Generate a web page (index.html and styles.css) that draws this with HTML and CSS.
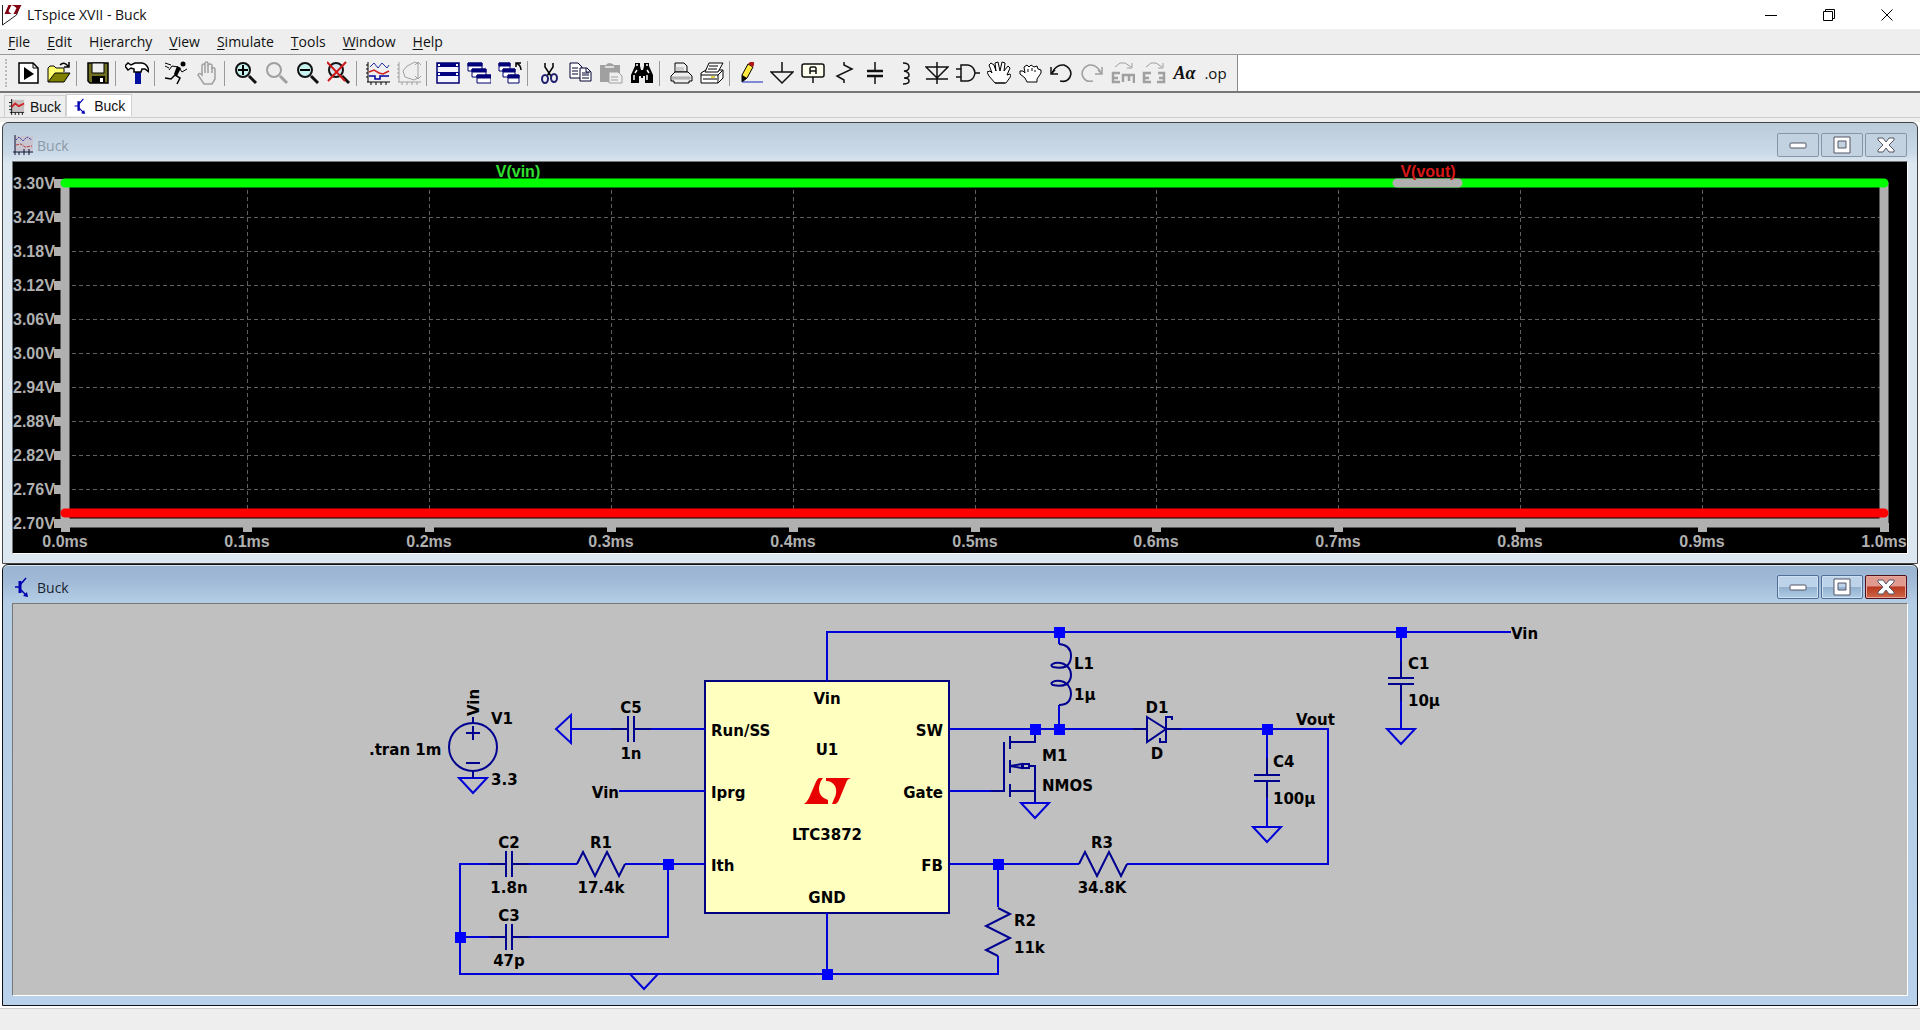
FILE: index.html
```html
<!DOCTYPE html>
<html lang="en">

<head>
    <meta charset="utf-8" />
    <meta name="viewport" content="width=device-width, initial-scale=1" />
    <title>LTspice XVII - Buck</title>
    <link rel="stylesheet" href="styles.css">
</head>

<body>
    <!-- shared shapes -->
    <svg class="defs" width="0" height="0" aria-hidden="true">
        <defs>
            <symbol id="lens" viewBox="0 0 24 24">
                <path d="M15 15l7 7" stroke="currentColor" stroke-width="3" fill="none" />
                <circle cx="9" cy="9" r="7" stroke="currentColor" stroke-width="2" />
            </symbol>
            <symbol id="transistor" viewBox="0 0 20 20">
                <path d="M2 10h4M7 8l6-7M7 12l6 6" stroke="#0000b0" fill="none" stroke-width="1.500" />
                <path d="M7 4v12" stroke="#0000b0" stroke-width="3" />
                <path d="M15 20l-5-1 4-4z" fill="#0000b0" />
            </symbol>
            <symbol id="win-min" viewBox="0 0 18 18">
                <rect x="1" y="7" width="16" height="5" rx="1" fill="#fff" stroke="#556" />
            </symbol>
            <symbol id="win-max" viewBox="0 0 18 18">
                <path d="M1 1h16v16H1zM5 5v7h8V5z" fill="#fff" stroke="#556" fill-rule="evenodd" />
            </symbol>
            <symbol id="win-close" viewBox="0 0 18 18">
                <path d="M1 2h5l3 4 3-4h5v2l-5 5 5 5v2h-5l-3-4-3 4H1v-2l5-5-5-5z" fill="#fff" stroke="#556" />
            </symbol>
        </defs>
    </svg>

    <header class="titlebar">
        <svg class="logo" viewBox="0 0 20 22">
            <path d="M1 1v20L15 11l3-8" fill="none" stroke="#222" stroke-width="1" />
            <path d="M3 10L7 1h3L7 7q1 2 3 3zM10 1h10l-5 9h-3l3-6q-2-2-5-3z" fill="#800010" />
        </svg>
        <h1>LTspice XVII - Buck</h1>
        <div class="captions">
            <button aria-label="Minimize"><svg viewBox="0 0 14 14"><path d="M1 7.500h12" /></svg></button>
            <button aria-label="Restore"><svg viewBox="0 0 14 14"><path d="M1.500 3.500h9v9h-9zM3.500 3V1.500h9v9H11" /></svg></button>
            <button aria-label="Close"><svg viewBox="0 0 14 14"><path d="M1.500 1.500l11 11M12.500 1.500l-11 11" /></svg></button>
        </div>
    </header>

    <nav class="menu">
        <button><u>F</u>ile</button>
        <button><u>E</u>dit</button>
        <button>H<u>i</u>erarchy</button>
        <button><u>V</u>iew</button>
        <button><u>S</u>imulate</button>
        <button><u>T</u>ools</button>
        <button><u>W</u>indow</button>
        <button><u>H</u>elp</button>
    </nav>

    <div class="toolbar-row">
        <div class="toolbar">
            <button aria-label="New schematic"><svg viewBox="0 0 24 24">
                <path d="M3 2h14l5 5v15H3z" fill="#fff" stroke="#000" stroke-width="1.500" /><path d="M17 2v5h5" fill="none" stroke="#000" />
                <path d="M8 6v13l10-6z" />
            </svg></button>
            <button aria-label="Open"><svg viewBox="0 0 24 24">
                <path d="M1 21V7l2-2h4l2 2h8v4" fill="#ffff70" stroke="#000" />
                <path d="M1 21l7-9h15l-6 9z" fill="#808000" stroke="#000" />
                <path d="M13 4q4-4 8 1M22 1v5h-5" fill="none" stroke="#000" stroke-width="1.500" />
            </svg></button>
            <span class="sep"></span>
            <button aria-label="Save"><svg viewBox="0 0 24 24">
                <path d="M2 2h20v20H4l-2-2z" fill="#707020" stroke="#000" stroke-width="1.500" />
                <path d="M6 2h12v10H6z" fill="#eee" stroke="#000" /><path d="M6 15h13v7H6z" /><path d="M14 17h3v4h-3z" fill="#fff" />
            </svg></button>
            <span class="sep"></span>
            <button aria-label="Control panel"><svg viewBox="0 0 24 24">
                <path d="M10 10h6v13h-6z" fill="#0010a0" />
                <path d="M0 5l3-3 3 2 4-2h7q6 1 7 9l-4-3h-3l-1 3H9V8L6 7 3 9z" fill="#fff" stroke="#000" stroke-width="1.500" />
            </svg></button>
            <span class="sep"></span>
            <button aria-label="Run"><svg viewBox="0 0 24 24">
                <circle cx="19" cy="3" r="2.500" />
                <path d="M14 8l-3 6 5 3-3 6M11 14l-4 4-6-1" fill="none" stroke="#000" stroke-width="1.500" />
                <path d="M13 5l4 2-4 8-3-2z" />
                <path d="M14 6L8 5 5 9M16 8l2 3 5-3M1 2l6 2M1 5l4 2" fill="none" stroke="#000" />
            </svg></button>
            <button aria-label="Halt" class="off"><svg viewBox="0 0 24 24">
                <path d="M7 14V4q2-2 3 0V2q2-2 3 0v2q2-2 4 0v3q2-1 3 1v10l-3 5H9L3 14q1-3 4 0z" fill="#eee" stroke="currentColor" stroke-width="1.500" />
                <path d="M10 4v8M13 4v8M17 6v6" stroke="currentColor" stroke-width="1.500" />
            </svg></button>
            <span class="sep"></span>
            <button aria-label="Zoom in"><svg viewBox="0 0 24 24">
                <use href="#lens" fill="#c8f4f0" /><path d="M4 9h10M9 4v10" stroke="#000" stroke-width="2" />
            </svg></button>
            <button aria-label="Zoom area" class="off"><svg viewBox="0 0 24 24"><use href="#lens" fill="#eee" /></svg></button>
            <button aria-label="Zoom out"><svg viewBox="0 0 24 24">
                <use href="#lens" fill="#c8f4f0" /><path d="M4 9h10" stroke="#000" stroke-width="2" />
            </svg></button>
            <button aria-label="Zoom to fit"><svg viewBox="0 0 24 24">
                <use href="#lens" fill="#d8e4f0" /><path d="M0 1l18 19M19 1L1 20" stroke="#d01818" stroke-width="2" />
            </svg></button>
            <span class="sep"></span>
            <button aria-label="Autorange"><svg viewBox="0 0 24 24" fill="none">
                <path d="M2 1v20M1 21h23M0 4h2M0 8h2M0 12h2M0 16h2M5 21v3M10 21v3M15 21v3M20 21v3" stroke="#000" />
                <path d="M4 6l4-4 4 5 4-5 5 5 2-3" stroke="#2030a0" />
                <path d="M3 11l5-2 5 3 4 1 6-3" stroke="#d02020" stroke-width="1.500" />
                <path d="M3 15h6v3h5v-3h9" stroke="#0000a0" stroke-width="1.500" />
            </svg></button>
            <button aria-label="FFT" class="off"><svg viewBox="0 0 24 24" fill="none" stroke="currentColor">
                <path d="M2 1v20M1 21h23M0 4h2M0 8h2M0 12h2M0 16h2M5 21v3M10 21v3M15 21v3M20 21v3" />
                <path d="M21 3l-3-2-8 4-4 5 2 6 9 3 4-2M21 1v17M18 4l3-3 3 3M18 15l3 3 3-3" />
            </svg></button>
            <span class="sep"></span>
            <button aria-label="Tile windows"><svg viewBox="0 0 24 24">
                <path d="M1 2h22v20H1z" fill="#f4f4ff" stroke="#000070" stroke-width="1.500" />
                <path d="M1 2h22v4H1zM1 11h22v4H1z" fill="#000080" /><path d="M2 3h2v2H2zM20 3h2v2h-2zM2 12h2v2H2zM20 12h2v2h-2z" fill="#fff" />
            </svg></button>
            <button aria-label="Cascade windows"><svg viewBox="0 0 24 24" fill="#fff" stroke="#000070">
                <path d="M1 2h14v8H1zM5 8h14v8H5zM10 14h14v8H10z" /><path d="M1 2h14v3H1zM5 8h14v3H5zM10 14h14v3H10z" fill="#000080" />
            </svg></button>
            <button aria-label="Close all windows"><svg viewBox="0 0 24 24" fill="#fff" stroke="#000070">
                <path d="M1 2h11v8H1zM5 8h12v8H5zM10 14h11v8H10z" /><path d="M1 2h11v3H1zM5 8h12v3H5zM10 14h11v3H10z" fill="#000080" />
                <path d="M18 6V2h5M18 2q5 2 5 7" fill="none" stroke="#000" stroke-width="1.500" />
            </svg></button>
            <span class="sep"></span>
            <button aria-label="Cut"><svg viewBox="0 0 24 24" fill="none">
                <path d="M8 2v4l6 9M16 2v4l-6 9" stroke="#000" stroke-width="1.500" />
                <ellipse cx="8" cy="18" rx="3" ry="4" stroke="#202070" stroke-width="2" /><ellipse cx="17" cy="17" rx="3" ry="4" stroke="#202070" stroke-width="2" />
            </svg></button>
            <button aria-label="Copy"><svg viewBox="0 0 24 24" fill="#fff" stroke="#000030">
                <path d="M2 2h8l4 4v11H2z" /><path d="M4 7h6M4 10h6M4 13h6" />
                <path d="M12 7h7l4 4v9H12z" /><path d="M14 12h7M14 14h7M14 17h7M18 7v4h4" />
            </svg></button>
            <button aria-label="Paste" class="off"><svg viewBox="0 0 24 24">
                <path d="M1 4h6q3-4 8 0h6v17H1z" fill="currentColor" /><path d="M6 5h9v2H6z" fill="#ddd" />
                <path d="M10 11h9l4 4v7H10z" fill="#eee" stroke="currentColor" /><path d="M12 16h7M12 19h7" stroke="currentColor" />
            </svg></button>
            <button aria-label="Find"><svg viewBox="0 0 24 24">
                <path d="M5 5V2h5v3l1 4h2l1-4V2h5v3l4 9v8h-8v-7h-2v2h-2v-2H9v7H1v-8z" />
                <path d="M7 3v2M17 3v2M4 14v5M17 14v5M7 9l-2 3M17 9l2 3" stroke="#fff" stroke-width="1.500" />
            </svg></button>
            <span class="sep"></span>
            <button aria-label="Print setup"><svg viewBox="0 0 24 24" fill="#eee" stroke="#000">
                <path d="M6 11V2h9l3 3v6z" /><path d="M2 15l4-4h13l4 4v5h-3v2H5v-2H2z" /><path d="M3 16h18v2H3z" fill="#bbb" stroke="#aaa" /><path d="M6 7h9M6 9h9" stroke="#aaa" />
            </svg></button>
            <button aria-label="Print"><svg viewBox="0 0 24 24" fill="#fff" stroke="#000">
                <path d="M1 12l5-3h17l-5 5v8H1z" /><path d="M18 22l5-5V9M1 14h17" /><path d="M5 11l4-9h14l-5 9z" /><path d="M9 5h9M8 8h9M3 18h14" />
                <path d="M11 16h4" stroke="#d8c800" stroke-width="1.500" />
            </svg></button>
            <span class="sep"></span>
            <button aria-label="Wire"><svg viewBox="0 0 24 24">
                <path d="M3 14l6-11 5 3-6 11-5 4z" fill="#ffe840" stroke="#000" /><path d="M9 3l2-2h4v3l-1 2z" fill="#b01818" />
                <path d="M3 14v7l5-4z" /><path d="M3 21h21" stroke="#1020c0" />
            </svg></button>
            <button aria-label="Ground"><svg viewBox="0 0 24 24" class="line"><path d="M12 1v10M1 11h22L12 22z" /></svg></button>
            <button aria-label="Label net"><svg viewBox="0 0 24 24" class="line">
                <rect x="1" y="3" width="22" height="13" rx="2" fill="#fffff0" /><path d="M12 16v6M9 13V7l1-1h4l1 1v6M9 10h6" />
            </svg></button>
            <button aria-label="Resistor"><svg viewBox="0 0 24 24" class="line"><path d="M12 1v3l8 4-15 7 7 4v3" /></svg></button>
            <button aria-label="Capacitor"><svg viewBox="0 0 24 24" class="line"><path d="M12 1v9M12 15v8" /><path d="M4 10h16M4 15h16" stroke-width="2.500" /></svg></button>
            <button aria-label="Inductor"><svg viewBox="0 0 24 24" class="line"><path d="M9 2q6 0 6 4t-5 4q5 1 5 4t-5 3q5 0 5 3t-6 3" /></svg></button>
            <button aria-label="Diode"><svg viewBox="0 0 24 24" class="line"><path d="M12 1v22M1 6h22L12 17zM1 18h22" /></svg></button>
            <button aria-label="Component"><svg viewBox="0 0 24 24" class="line"><path d="M5 4h7q6 1 7 8-1 7-7 8H5zM0 8h5M0 16h5M19 12h5" /></svg></button>
            <button aria-label="Move"><svg viewBox="0 0 24 24" class="hand">
                <path d="M8 22l-6-7-2-4 3-1 2 2-3-8 2-2 3 2 2 6-1-8 3-1 2 9 2-9 3 1-1 8 4-5 2 2-3 7 3-1 1 2-5 7z" />
                <path d="M8 22h10" />
            </svg></button>
            <button aria-label="Drag"><svg viewBox="0 0 24 24" class="hand">
                <path d="M7 17l-5-4v-3h3l2 2-1-6 3-2 2 2 2-2 3 2 3-1 1 3 3 1v3l-4 6v3H9z" />
                <path d="M10 8v3M14 7v3M17 9v2" />
            </svg></button>
            <button aria-label="Undo"><svg viewBox="0 0 24 24" class="line"><path d="M3 12q4-9 12-8 7 3 7 9-2 9-11 7" /><path d="M2 6v7h7M2 13l4-4" /></svg></button>
            <button aria-label="Redo" class="off"><svg viewBox="0 0 24 24" class="line"><path d="M21 12Q17 3 9 4 2 7 2 13q2 9 11 7" /><path d="M22 6v7h-7M22 13l-4-4" /></svg></button>
            <button aria-label="Rotate" class="off"><svg viewBox="0 0 24 24" class="line">
                <path d="M4 6l5-4h5l6 4M21 2v5h-5" stroke-width="1" /><path d="M9 12H2v9h7M2 17h5M12 21v-7h11v8M18 14v6" stroke-width="2.500" />
            </svg></button>
            <button aria-label="Mirror" class="off"><svg viewBox="0 0 24 24" class="line">
                <path d="M4 6l5-4h5l6 4M21 2v5h-5" stroke-width="1" /><path d="M9 12H2v9h7M2 17h5M16 12h6v9h-7M22 17h-5" stroke-width="2.500" />
            </svg></button>
            <button aria-label="Text" class="text-tool">Aα</button>
            <button aria-label="Spice directive" class="op-tool">.op</button>
        </div>
    </div>

    <div class="tabs">
        <button class="tab">
            <svg viewBox="0 0 18 18">
                <path d="M3 1h14v13H3z" fill="#c8c0c0" />
                <path d="M3 0v18M1 15h16M0 4h3M0 8h3M0 12h3M7 15v3M11 15v3M15 15v3" stroke="#000" fill="none" />
                <path d="M3 9l4-4 4 3 6-3" stroke="#d02020" stroke-width="2" fill="none" />
            </svg>
            Buck
        </button>
        <button class="tab active">
            <svg viewBox="0 0 20 20"><use href="#transistor" /></svg>
            Buck
        </button>
    </div>

    <main class="workspace">
        <section class="window">
            <div class="window-title">
                <svg class="window-icon" viewBox="0 0 20 20" fill="none">
                    <path d="M2 1h18v15H2z" fill="#c8c4d0" />
                    <path d="M2 0v20M0 17h20M6 17v3M11 14v6M16 14v6" stroke="#101030" />
                    <path d="M3 5l3-3 4 4 4-4 5 3" stroke="#3038a0" stroke-dasharray="2 1" />
                    <path d="M3 10l5-1 4 3 7-1" stroke="#b84040" stroke-dasharray="3 1" />
                </svg>
                <h2>Buck</h2>
                <div class="window-buttons">
                    <button aria-label="Minimize"><svg><use href="#win-min" /></svg></button>
                    <button aria-label="Maximize"><svg><use href="#win-max" /></svg></button>
                    <button aria-label="Close"><svg><use href="#win-close" /></svg></button>
                </div>
            </div>
            <div class="view">
                <svg id="plot" viewBox="0 0 1894 391">
                    <g id="grid"></g>
                    <path class="axis" d="M52 21V361H1871V21" />
                    <g id="ticks"></g>
                    <path class="trace vin" d="M52 21H1871" />
                    <path class="trace marker" d="M1384 21H1445" />
                    <path class="trace vout" d="M52 351H1871" />
                    <text class="vin" x="505" y="15">V(vin)</text>
                    <text class="vout" x="1415" y="15">V(vout)</text>
                </svg>
            </div>
        </section>

        <section class="window active">
            <div class="window-title">
                <svg class="window-icon" viewBox="0 0 20 20"><use href="#transistor" /></svg>
                <h2>Buck</h2>
                <div class="window-buttons">
                    <button aria-label="Minimize"><svg><use href="#win-min" /></svg></button>
                    <button aria-label="Maximize"><svg><use href="#win-max" /></svg></button>
                    <button aria-label="Close" class="close"><svg><use href="#win-close" /></svg></button>
                </div>
            </div>
            <div class="view">
                <svg id="schematic" viewBox="0 0 1894 391">
                    <defs>
                        <path id="gnd" d="M-14 0H14L0 15z" />
                        <path id="cap" d="M-20 0H-3M-3 -13V13M3 -13V13M3 0H20" />
                        <path id="res" d="M-24 0L-18 -12L-6 12L6 -12L18 12L24 0" />
                        <rect id="node" x="-5" y="-5" width="11" height="11" />
                    </defs>

                    <rect class="chip" x="692" y="77" width="244" height="232" />

                    <g class="wire">
                        <path d="M557 125H600M636 125H692" />
                        <path d="M606 187H692" />
                        <path d="M692 260H612M564 260H515M477 260H447V370H985V352M985 303V260" />
                        <path d="M447 333H477M515 333H655V260" />
                        <path d="M814 77V28H1498M814 309V370" />
                        <path d="M937 125H1120M1168 125H1315V260H1114M1066 260H937" />
                        <path d="M937 187H978" />
                        <path d="M1046 28V40M1046 101V125" />
                        <path d="M1254 125V157M1254 191V223" />
                        <path d="M1388 28V60M1388 94V125" />
                        <use href="#gnd" transform="translate(460 174)" />
                        <use href="#gnd" transform="translate(558 125) rotate(90)" />
                        <use href="#gnd" transform="translate(631 370)" />
                        <use href="#gnd" transform="translate(1022 199)" />
                        <use href="#gnd" transform="translate(1254 223)" />
                        <use href="#gnd" transform="translate(1388 125)" />
                    </g>

                    <g class="part">
                        <circle cx="460" cy="143" r="24" />
                        <path d="M460 113V119M460 167V174M453 129H467M460 122V136M453 159H467" />
                        <use href="#cap" transform="translate(618 125)" />
                        <use href="#cap" transform="translate(496 260)" />
                        <use href="#cap" transform="translate(496 333)" />
                        <use href="#cap" transform="translate(1254 174) rotate(90)" />
                        <use href="#cap" transform="translate(1388 77) rotate(90)" />
                        <use href="#res" transform="translate(588 260)" />
                        <use href="#res" transform="translate(1090 260)" />
                        <use href="#res" transform="translate(985 328) rotate(90)" />
                        <!-- L1 -->
                        <path d="M1046 40Q1058 41 1058 52Q1058 58 1054 62Q1048 65 1040 63Q1036 61 1042 59Q1050 58 1055 63Q1058 66 1058 71Q1058 76 1054 80Q1048 83 1040 81Q1036 79 1042 77Q1050 76 1055 81Q1058 85 1058 89Q1058 101 1046 101" />
                        <!-- D1 -->
                        <path d="M1120 125H1134M1134 113V138L1153 125zM1159 116V113H1153V138H1147V134M1153 125H1168" />
                        <!-- M1 -->
                        <path d="M978 187H991V138M997 132V145M997 156V169M997 180V193M997 138H1022V125M997 187H1022M1017 162H1022V198" />
                        <path d="M997 162L1009 160V164zM1010 160H1016V164H1010z" />
                    </g>

                    <g class="nodes">
                        <use href="#node" x="1046" y="28" />
                        <use href="#node" x="1388" y="28" />
                        <use href="#node" x="1022" y="125" />
                        <use href="#node" x="1046" y="125" />
                        <use href="#node" x="1254" y="125" />
                        <use href="#node" x="655" y="260" />
                        <use href="#node" x="985" y="260" />
                        <use href="#node" x="447" y="333" />
                        <use href="#node" x="814" y="370" />
                    </g>

                    <!-- LT logo -->
                    <path class="lt" d="M806 174H810Q806 179 806 185Q806 193 815 196V200H791Q794 198 796 194L802 180Q804 175 806 174zM813 174H838Q834 175 833 179L826 196Q824 200 822 200H819L821 195Q825 188 822 182Q819 177 813 177z" />

                    <g>
                        <text x="356" y="151">.tran 1m</text>
                        <text x="478" y="120">V1</text>
                        <text x="478" y="181">3.3</text>
                        <text transform="translate(466 112) rotate(-90)">Vin</text>
                        <text x="1061" y="65">L1</text>
                        <text x="1061" y="96">1µ</text>
                        <text x="1029" y="157">M1</text>
                        <text x="1029" y="187">NMOS</text>
                        <text x="1260" y="163">C4</text>
                        <text x="1260" y="200">100µ</text>
                        <text x="1395" y="65">C1</text>
                        <text x="1395" y="102">10µ</text>
                        <text x="1001" y="322">R2</text>
                        <text x="1001" y="349">11k</text>
                        <text x="1283" y="121">Vout</text>
                        <text x="1498" y="35">Vin</text>
                        <text x="698" y="132">Run/SS</text>
                        <text x="698" y="194">Iprg</text>
                        <text x="698" y="267">Ith</text>
                    </g>
                    <g class="mid">
                        <text x="618" y="109">C5</text>
                        <text x="618" y="155">1n</text>
                        <text x="496" y="244">C2</text>
                        <text x="496" y="289">1.8n</text>
                        <text x="496" y="317">C3</text>
                        <text x="496" y="362">47p</text>
                        <text x="588" y="244">R1</text>
                        <text x="588" y="289">17.4k</text>
                        <text x="1144" y="109">D1</text>
                        <text x="1144" y="155">D</text>
                        <text x="1089" y="244">R3</text>
                        <text x="1089" y="289">34.8K</text>
                        <text x="814" y="100">Vin</text>
                        <text x="814" y="151">U1</text>
                        <text x="814" y="236">LTC3872</text>
                        <text x="814" y="299">GND</text>
                    </g>
                    <g class="end">
                        <text x="606" y="194">Vin</text>
                        <text x="930" y="132">SW</text>
                        <text x="930" y="194">Gate</text>
                        <text x="930" y="267">FB</text>
                    </g>
                </svg>
            </div>
        </section>
    </main>

    <footer class="status"></footer>

    <script>
        // plot area, in svg units
        const left = 52, right = 1871, upper = 21, lower = 361;
        const step = (right - left) / 10;
        const row = (lower - upper) / 10;

        var grid = "";
        var ticks = "";
        for (var i = 0; i <= 10; i++) {
            var x = Math.round(left + i * step);
            var y = Math.round(upper + i * row);
            if (i > 0 && i < 10) {
                grid += `<path d="M${x}.5 ${upper}V${lower}M${left} ${y}.5H${right}" />`;
            }
            ticks += `<rect x="${x - 4}" y="361" width="9" height="9" />`;
            ticks += `<rect x="41" y="${y - 4}" width="9" height="9" />`;
            ticks += `<text class="mid" x="${x}" y="385">${(i / 10).toFixed(1)}ms</text>`;
            ticks += `<text x="0" y="${y + 6}">${(3.3 - i * 0.06).toFixed(2)}V</text>`;
        }
        document.getElementById("grid").innerHTML = grid;
        document.getElementById("ticks").innerHTML = ticks;
    </script>
</body>

</html>
```
FILE: styles.css
```css
* {
    box-sizing: border-box;
}

body {
    margin: 0;
    min-height: 100vh;
    display: flex;
    flex-direction: column;
    background: #eee;
    color: #111;
    font-family: "Open Sans", sans-serif;
    font-size: 14px;
}

h1,
h2 {
    margin: 0;
    font-size: 14px;
    font-weight: normal;
}

button {
    padding: 0;
    border: 0;
    background: none;
    color: inherit;
    font: inherit;
}

.defs {
    position: absolute;
}

/* main title bar */
.titlebar {
    display: flex;
    align-items: center;
    height: 29px;
    padding: 0 4px 0 1px;
    background: #fff;
}

.logo {
    width: 21px;
    height: 22px;
    margin-right: 5px;
}

.captions {
    display: flex;
    margin-left: auto;
}

.captions button {
    display: flex;
    align-items: center;
    justify-content: center;
    width: 58px;
    height: 28px;
}

.captions svg {
    width: 14px;
    height: 14px;
    fill: none;
    stroke: #000;
}

.menu {
    display: flex;
    gap: 17px;
    height: 26px;
    padding: 0 8px;
    border-bottom: 1px solid #999;
}

u {
    text-underline-offset: 2px;
}

/* toolbar */
.toolbar-row {
    display: flex;
    background: #fff;
    border-bottom: 2px solid #777;
}

.toolbar {
    display: flex;
    align-items: center;
    height: 36px;
    padding: 0 6px 0 8px;
    background: #efefef;
    border-right: 1px solid #888;
}

.toolbar::before {
    content: "";
    height: 28px;
    margin: 0 5px 0 -3px;
    border-left: 2px dotted #bbb;
}

.toolbar button {
    display: flex;
    align-items: center;
    justify-content: center;
    width: 31px;
    height: 30px;
}

.toolbar svg {
    width: 24px;
    height: 24px;
}

.off {
    color: #a0a0a0;
}

.toolbar .off {
    color: #a0a0a0;
}

.line {
    fill: none;
    stroke: currentColor;
    stroke-width: 1.5;
}

.hand {
    fill: #fff;
    stroke: #000;
}

.sep {
    width: 8px;
    height: 25px;
    border-left: 1px solid #999;
    margin-left: 2px;
    margin-right: -2px;
}

.toolbar .text-tool {
    font: italic bold 18px "Liberation Serif", serif;
}

.toolbar .op-tool {
    font: 15px "Open Sans", sans-serif;
}

/* document tabs */
.tabs {
    display: flex;
    height: 29px;
    padding: 0 4px;
    background: linear-gradient(#ccc, #ccc) 0 24px / 100% 1px no-repeat;
}

.tab {
    display: flex;
    align-items: center;
    gap: 5px;
    height: 22px;
    margin-top: 2px;
    padding: 0 4px;
    border: 1px solid #d0d0d0;
    border-bottom: 0;
    font: 14px "Liberation Sans", sans-serif;
}

.tab svg {
    width: 16px;
    height: 16px;
}

.tab.active {
    margin-top: 1px;
    padding: 0 6px;
    background: #fff;
}

/* child windows */
.workspace {
    padding: 0 2px 2px;
    border-bottom: 1px solid #ccc;
    background: #fff;
}

.window {
    padding: 0 9px 9px;
    border: 1px solid #444;
    border-radius: 6px 6px 0 0;
    background: linear-gradient(#bccbd9, #cbdae8 30px, #dce7f0 40px);
}

.window.active {
    border-color: #111;
    background: linear-gradient(#99b4d1, #9fb9d6 14px, #b4cee6 38px, #b9d1ea);
    box-shadow: inset 0 1px #dce8f4;
}

.window-title {
    display: flex;
    align-items: center;
    height: 38px;
    padding: 10px 1px 4px;
    color: #8b98a6;
}

.active .window-title {
    color: #1a2430;
}

.window-icon {
    width: 20px;
    height: 20px;
    margin-right: 4px;
}

.window-buttons {
    display: flex;
    gap: 2px;
    margin-left: auto;
}

.window-buttons button {
    display: flex;
    align-items: center;
    justify-content: center;
    width: 42px;
    height: 24px;
    border: 1px solid #8795a8;
    border-radius: 2px;
    background: #c3d2e0;
}

.active .window-buttons button {
    border-color: #4f6f98;
    background: linear-gradient(#bdd3ea 50%, #92b0ce 50%, #b0cce6);
    box-shadow: inset 0 0 0 1px #cfe0f0;
}

.active .window-buttons .close {
    border-color: #501018;
    background: linear-gradient(#e09a90 45%, #b83820 50%, #d06848);
    box-shadow: inset 0 0 0 1px #e8a8a0;
}

.window-buttons svg {
    width: 18px;
    height: 18px;
}

.view {
    border: 1px solid #777;
    border-right-color: #fff;
    border-bottom-color: #fff;
}

.view svg {
    display: block;
    width: 100%;
    height: auto;
}

/* waveform plot */
#plot {
    background: #000;
    fill: #b0b0b0;
    font: bold 16px "Liberation Sans", sans-serif;
}

#grid path {
    stroke: #606060;
    stroke-dasharray: 4 3;
}

.axis,
.trace {
    fill: none;
    stroke: #b0b0b0;
    stroke-width: 9;
}

.trace {
    stroke-linecap: round;
}

.trace.vin {
    stroke: #0f0;
}

.trace.vout {
    stroke: #f00;
}

text.vin,
text.vout,
.mid {
    text-anchor: middle;
}

text.vin {
    fill: #30e030;
}

text.vout {
    fill: #d81818;
}

/* schematic */
#schematic {
    background: #c0c0c0;
    font: bold 15px "DejaVu Sans", sans-serif;
}

.wire,
.part {
    fill: none;
    stroke: #0000d8;
    stroke-width: 2;
}

.part {
    stroke: #000090;
}

.nodes {
    fill: #00f;
}

.chip {
    fill: #ffffc0;
    stroke: #000080;
    stroke-width: 2;
}

.lt {
    fill: #e80000;
}

.end {
    text-anchor: end;
}

.status {
    flex: 1;
    min-height: 20px;
}
```
